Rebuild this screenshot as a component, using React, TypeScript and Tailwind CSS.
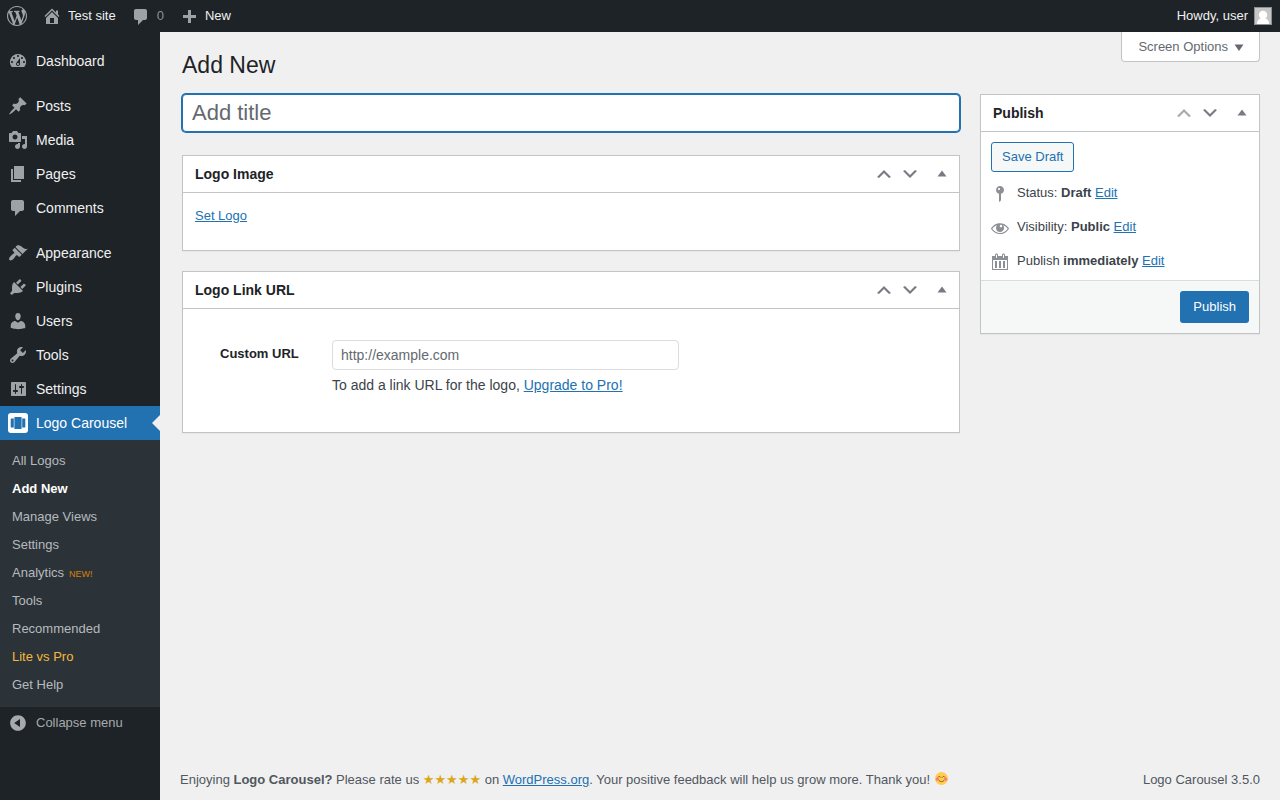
import type { ReactNode } from 'react';
import { clsx } from 'clsx';

// 20x20 glyph outlines used across the admin screen
const icons = {
  wordpress:
    'M20 10c0-5.51-4.49-10-10-10C4.48 0 0 4.49 0 10c0 5.52 4.48 10 10 10 5.51 0 10-4.48 10-10zM7.78 15.37L4.37 6.22c.55-.02 1.17-.08 1.17-.08.5-.06.44-1.13-.06-1.11 0 0-1.45.11-2.37.11-.18 0-.37 0-.58-.01C4.12 2.69 6.87 1.11 10 1.11c2.33 0 4.45.87 6.05 2.34-.68-.11-1.65.39-1.65 1.58 0 .74.45 1.36.9 2.1.35.61.55 1.36.55 2.46 0 1.49-1.4 5-1.4 5l-3.03-8.37c.54-.02.82-.17.82-.17.5-.05.44-1.25-.06-1.22 0 0-1.44.12-2.38.12-.87 0-2.33-.12-2.33-.12-.5-.03-.56 1.2-.06 1.22l.92.08 1.26 3.41zM17.41 10c.24-.64.74-1.87.43-4.25.7 1.29 1.05 2.71 1.05 4.25 0 3.29-1.73 6.24-4.4 7.78.97-2.59 1.94-5.2 2.92-7.78zM6.1 18.09C3.12 16.65 1.11 13.53 1.11 10c0-1.3.23-2.48.72-3.59C3.25 10.3 4.67 14.2 6.1 18.09zm4.03-6.63l2.58 6.98c-.86.29-1.76.45-2.71.45-.79 0-1.57-.11-2.29-.33.81-2.38 1.62-4.74 2.42-7.1z',
  home: 'M16 8.5l1.53 1.53-1.06 1.06L10 4.6l-6.47 6.49-1.06-1.06L10 2.5l4 4v-2h2v4zm-6-2.46l6 5.99V18H4v-5.97zM12 17v-5H8v5h4z',
  plus: 'M17 9v3h-5v5H9v-5H4V9h5V4h3v5h5z',
  dashboard:
    'M3.76 16h12.48A7.998 7.998 0 0 0 10 3a7.998 7.998 0 0 0-6.24 13zM10 4c.55 0 1 .45 1 1s-.45 1-1 1-1-.45-1-1 .45-1 1-1zM6 6c.55 0 1 .45 1 1s-.45 1-1 1-1-.45-1-1 .45-1 1-1zm8 0c.55 0 1 .45 1 1s-.45 1-1 1-1-.45-1-1 .45-1 1-1zm-5.37 5.55L12 7v6c0 1.1-.9 2-2 2s-2-.9-2-2c0-.57.24-1.08.63-1.45zM4 10c.55 0 1 .45 1 1s-.45 1-1 1-1-.45-1-1 .45-1 1-1zm12 0c.55 0 1 .45 1 1s-.45 1-1 1-1-.45-1-1 .45-1 1-1zm-5 3c0-.55-.45-1-1-1s-1 .45-1 1 .45 1 1 1 1-.45 1-1z',
  post: 'M10.44 3.02l1.82-1.82 6.36 6.35-1.83 1.82c-1.05-.68-2.48-.57-3.41.36l-.75.75c-.92.93-1.04 2.35-.35 3.41l-1.83 1.82-2.41-2.41-2.8 2.79c-.42.42-3.38 2.71-3.8 2.29s1.86-3.39 2.28-3.81l2.79-2.79L4.1 9.36l1.83-1.82c1.05.69 2.48.57 3.4-.36l.75-.75c.93-.92 1.05-2.35.36-3.41z',
  media:
    'M13 11V4c0-.55-.45-1-1-1h-1.67L9 1H5L3.67 3H2c-.55 0-1 .45-1 1v7c0 .55.45 1 1 1h10c.55 0 1-.45 1-1zM7 4.5c1.38 0 2.5 1.12 2.5 2.5S8.38 9.5 7 9.5 4.5 8.38 4.5 7 5.62 4.5 7 4.5zM14 6h5v10.5c0 1.38-1.12 2.5-2.5 2.5S14 17.88 14 16.5s1.12-2.5 2.5-2.5c.17 0 .34.02.5.05V9h-3V6zm-4 8.05V13h2v3.5c0 1.38-1.12 2.5-2.5 2.5S7 17.88 7 16.5 8.12 14 9.5 14c.17 0 .34.02.5.05z',
  page: 'M6 15V2h10v13H6zm-1 1h8v2H3V5h2v11z',
  comments: 'M5 2h9c1.1 0 2 .9 2 2v7c0 1.1-.9 2-2 2h-2l-5 5v-5H5c-1.1 0-2-.9-2-2V4c0-1.1.9-2 2-2z',
  appearance:
    'M14.48 11.06L7.41 3.99l1.5-1.5c.5-.56 2.3-.47 3.51.32 1.21.8 1.43 1.28 2.91 2.1 1.18.64 2.45 1.26 4.45.85zm-.71.71L6.7 4.7 4.93 6.47c-.39.39-.39 1.02 0 1.41l1.06 1.06c.39.39.39 1.03 0 1.42-.6.6-1.43 1.11-2.21 1.69-.35.26-.7.53-1.01.84C1.43 14.23.4 16.08 1.4 17.07c.99 1 2.84-.03 4.18-1.36.31-.31.58-.66.85-1.02.57-.78 1.08-1.61 1.69-2.21.39-.39 1.02-.39 1.41 0l1.06 1.06c.39.39 1.02.39 1.41 0z',
  plugins:
    'M13.11 4.36L9.87 7.6 8 5.73l3.24-3.24c.35-.34 1.05-.2 1.56.32.52.51.66 1.21.31 1.55zm-8 1.77l.91-1.12 9.01 9.01-1.19.84c-.71.71-2.63 1.16-3.82 1.16H6.14L4.9 17.26c-.59.59-1.54.59-2.12 0-.59-.58-.59-1.53 0-2.12l1.24-1.24v-3.88c0-1.13.4-3.19 1.09-3.89zm7.26 3.97l3.24-3.24c.34-.35 1.04-.21 1.55.31.52.51.66 1.21.31 1.55l-3.24 3.25z',
  users:
    'M10 9.25c-2.27 0-2.73-3.44-2.73-3.44C7 4.02 7.82 2 9.97 2c2.16 0 2.98 2.02 2.71 3.81 0 0-.41 3.44-2.68 3.44zm0 2.57L12.72 10c2.39 0 4.52 2.33 4.52 4.53v2.49s-3.65 1.13-7.24 1.13c-3.65 0-7.24-1.13-7.24-1.13v-2.49c0-2.25 1.94-4.48 4.47-4.48z',
  tools:
    'M16.68 9.77c-1.34 1.34-3.3 1.67-4.95.99l-5.41 6.52c-.99.99-2.59.99-3.58 0s-.99-2.59 0-3.57l6.52-5.42c-.68-1.65-.35-3.61.99-4.95 1.28-1.28 3.12-1.62 4.72-1.06l-2.89 2.89 2.82 2.82 2.86-2.87c.53 1.58.18 3.39-1.08 4.65zM3.81 16.21c.4.39 1.04.39 1.43 0 .4-.4.4-1.04 0-1.43-.39-.4-1.03-.4-1.43 0-.39.39-.39 1.03 0 1.43z',
  settings:
    'M18 16V4c0-.55-.45-1-1-1H4c-.55 0-1 .45-1 1v12c0 .55.45 1 1 1h13c.55 0 1-.45 1-1zM8 11h1c.55 0 1 .45 1 1s-.45 1-1 1H8v1.5c0 .28-.22.5-.5.5s-.5-.22-.5-.5V13H6c-.55 0-1-.45-1-1s.45-1 1-1h1V5.5c0-.28.22-.5.5-.5s.5.22.5.5V11zm5-2h-1c-.55 0-1-.45-1-1s.45-1 1-1h1V5.5c0-.28.22-.5.5-.5s.5.22.5.5V7h1c.55 0 1 .45 1 1s-.45 1-1 1h-1v5.500c0 .28-.22.5-.5.5s-.5-.22-.5-.5V9z',
  collapse:
    'M10 2.16c4.33 0 7.84 3.51 7.84 7.84s-3.51 7.84-7.84 7.84S2.16 14.33 2.16 10 5.71 2.16 10 2.16zm2 11.72V6.12L6.18 9.97z',
  chevronUp: 'M15 14l-5-5-5 5-2-1 7-7 7 7z',
  chevronDown: 'M5 6l5 5 5-5 2 1-7 7-7-7z',
  arrowUp: 'M6.500 12.500l4.500-6 4.500 6z',
  arrowDown: 'M15.500 7.500l-4.500 6.500-4.500-6.500z',
  status:
    'M14 6c0 1.86-1.28 3.41-3 3.86V16c0 1-2 2-2 2V9.86c-1.72-.45-3-2-3-3.86 0-2.21 1.79-4 4-4s4 1.79 4 4zM8 5c0 .55.45 1 1 1s1-.45 1-1-.45-1-1-1-1 .45-1 1z',
  visibility:
    'M18.3 9.5C15 4.9 8.5 3.8 3.9 7.2c-1.2.9-2.2 2.1-3 3.4.2.4.5.8.8 1.2 3.3 4.6 9.6 5.6 14.2 2.4.9-.7 1.7-1.4 2.4-2.4.3-.4.5-.8.8-1.2-.3-.4-.5-.8-.8-1.1zm-8.2-2.3c.5-.5 1.3-.5 1.8 0s.5 1.3 0 1.8-1.3.5-1.8 0-.5-1.3 0-1.8zm-.1 7.7c-3.1 0-6-1.6-7.7-4.2C3.5 9 5.1 7.8 7 7.2c-.7.8-1 1.7-1 2.7 0 2.2 1.7 4.1 4 4.1 2.2 0 4.1-1.7 4.1-4v-.1c0-1-.4-2-1.1-2.7 1.9.6 3.5 1.8 4.7 3.5-1.7 2.6-4.6 4.2-7.7 4.2z',
  calendar:
    'M15 4h3v14H2V4h3V3c0-.83.67-1.5 1.5-1.5S8 2.17 8 3v1h4V3c0-.83.67-1.5 1.5-1.5S15 2.17 15 3v1zM6 3v2.5c0 .28.22.5.5.5s.5-.22.5-.5V3c0-.28-.22-.5-.5-.5S6 2.72 6 3zm7 0v2.5c0 .28.22.5.5.5s.5-.22.5-.5V3c0-.28-.22-.5-.5-.5s-.5.22-.5.5zm4 14V8H3v9h14zM7 9v7H5V9h2zm4 0v7H9V9h2zm4 0v7h-2V9h2z',
};

type IconName = keyof typeof icons;

function Icon({ name, className }: { name: IconName; className?: string }) {
  return (
    <svg viewBox="0 0 20 20" className={clsx('size-5 shrink-0 fill-current', className)} aria-hidden="true">
      <path fillRule="evenodd" d={icons[name]} />
    </svg>
  );
}

function CarouselLogo() {
  return (
    <svg viewBox="0 0 20 20" className="size-5 shrink-0" aria-hidden="true">
      <rect width="20" height="20" rx="3" fill="#fff" />
      <rect x="6.4" y="4" width="7.2" height="12" rx="0.6" fill="#2271b1" />
      <path d="M3.3 5.400h2.500v9.200H3.300a.6.6 0 0 1-.6-.6V6a.6.6 0 0 1 .6-.6zM14.200 5.400h2.500a.6.6 0 0 1 .6.6v8a.6.6 0 0 1-.6.6h-2.500z" fill="#2271b1" />
    </svg>
  );
}

function SmileEmoji() {
  return (
    <svg viewBox="0 0 36 36" className="ml-px inline-block size-[13px] align-[-1px]" role="img" aria-label="Smile">
      <circle cx="18" cy="18" r="18" fill="#ffcc4d" />
      <circle cx="6.5" cy="20" r="4.5" fill="#ff7892" />
      <circle cx="29.5" cy="20" r="4.5" fill="#ff7892" />
      <path
        d="M8 14.500c2-3 6-3 8 0M20 14.500c2-3 6-3 8 0M11 23.500c3 4.500 11 4.500 14 0"
        fill="none"
        stroke="#664500"
        strokeWidth="2"
        strokeLinecap="round"
      />
    </svg>
  );
}

const menuGroups: { label: string; icon: IconName }[][] = [
  [{ label: 'Dashboard', icon: 'dashboard' }],
  [
    { label: 'Posts', icon: 'post' },
    { label: 'Media', icon: 'media' },
    { label: 'Pages', icon: 'page' },
    { label: 'Comments', icon: 'comments' },
  ],
  [
    { label: 'Appearance', icon: 'appearance' },
    { label: 'Plugins', icon: 'plugins' },
    { label: 'Users', icon: 'users' },
    { label: 'Tools', icon: 'tools' },
    { label: 'Settings', icon: 'settings' },
  ],
];

const submenu = [
  { label: 'All Logos' },
  { label: 'Add New', current: true },
  { label: 'Manage Views' },
  { label: 'Settings' },
  { label: 'Analytics', badge: 'NEW!' },
  { label: 'Tools' },
  { label: 'Recommended' },
  { label: 'Lite vs Pro', highlight: true },
  { label: 'Get Help' },
];

function AdminBar() {
  return (
    <header className="flex h-8 items-center justify-between bg-[#1d2327] px-[7px] text-[13px] leading-8 text-[#f0f0f1]">
      <div className="flex items-center">
        <a href="#" aria-label="About WordPress" className="text-[#a0a5aa]">
          <Icon name="wordpress" />
        </a>
        <a href="#" className="ml-[15px] flex items-center gap-[6px]">
          <Icon name="home" className="text-[#9ca2a7]" />
          Test site
        </a>
        <a href="#" className="ml-[15px] flex items-center gap-[6px] text-[#8b9095]">
          <Icon name="comments" className="mt-[2px] text-[#9ca2a7]" />0
        </a>
        <a href="#" className="ml-[15px] flex items-center gap-[6px]">
          <Icon name="plus" className="text-[#9ca2a7]" />
          New
        </a>
      </div>
      <a href="#" className="flex items-center gap-[6px]">
        Howdy, user
        <svg viewBox="0 0 18 18" className="mr-px size-[18px]" aria-hidden="true">
          <rect width="18" height="18" fill="#8c8f94" />
          <rect x="1" y="1" width="16" height="16" fill="#c6c6c6" />
          <circle cx="9" cy="8" r="4.2" fill="#fff" />
          <path d="M3 17c0-3.500 2-5.500 4-5.500h4c2 0 4 2 4 5.500z" fill="#fff" />
        </svg>
      </a>
    </header>
  );
}

function Sidebar() {
  return (
    <nav className="w-40 shrink-0 bg-[#1d2327] pt-3 text-sm text-[#f0f0f1]">
      <div className="flex flex-col gap-[11px]">
        {menuGroups.map((group) => (
          <ul key={group[0].label}>
            {group.map((item) => (
              <li key={item.label}>
                <a href="#" className="flex h-[34px] items-center gap-2 pl-2">
                  <Icon name={item.icon} className="text-[#9ca2a7]" />
                  {item.label}
                </a>
              </li>
            ))}
          </ul>
        ))}
      </div>
      <a href="#" className="relative flex h-[34px] items-center gap-2 bg-[#2271b1] pl-2 text-white">
        <CarouselLogo />
        Logo Carousel
        <span className="absolute top-[9px] right-0 border-8 border-l-0 border-transparent border-r-[#f0f0f1]" />
      </a>
      <ul className="bg-[#2c3338] pt-[7px] pb-2 text-[13px] text-[#b5babe]">
        {submenu.map((item) => (
          <li key={item.label}>
            <a
              href="#"
              className={clsx(
                'block h-7 pl-3 leading-7',
                item.current && 'font-bold text-white',
                item.highlight && 'text-[#f5b83d]'
              )}
            >
              {item.label}
              {item.badge && <span className="pl-[5px] text-[9px] text-[#d67f0c]">{item.badge}</span>}
            </a>
          </li>
        ))}
      </ul>
      <button type="button" className="flex h-8 w-full items-center gap-2 pl-2 text-[13px] text-[#a7aaad]">
        <Icon name="collapse" />
        Collapse menu
      </button>
    </nav>
  );
}

interface PostboxProps {
  title: string;
  first?: boolean;
  children: ReactNode;
}

function Postbox({ title, first, children }: PostboxProps) {
  return (
    <section className="border border-[#c3c4c7] bg-white shadow-[0_1px_1px_rgba(0,0,0,0.04)]">
      <div className="flex items-center border-b border-[#c3c4c7] text-[#787c82]">
        <h2 className="flex-1 pl-3 text-sm leading-9 font-bold text-[#1d2327]">{title}</h2>
        <button
          type="button"
          aria-label={`Move ${title} up`}
          className={clsx('flex h-9 w-[26px] items-center justify-center', first && 'text-[#a7aaad]')}
        >
          <Icon name="chevronUp" />
        </button>
        <button type="button" aria-label={`Move ${title} down`} className="flex h-9 w-[26px] items-center justify-center">
          <Icon name="chevronDown" />
        </button>
        <button type="button" aria-label={`Toggle ${title}`} className="flex h-9 w-9 items-center justify-center">
          <Icon name="arrowUp" />
        </button>
      </div>
      {children}
    </section>
  );
}

function Link({ children }: { children: ReactNode }) {
  return (
    <a href="#" className="text-[#2271b1] underline">
      {children}
    </a>
  );
}

const publishRows: { icon: IconName; label: string; value: string }[] = [
  { icon: 'status', label: 'Status:', value: 'Draft' },
  { icon: 'visibility', label: 'Visibility:', value: 'Public' },
  { icon: 'calendar', label: 'Publish', value: 'immediately' },
];

function PublishBox() {
  return (
    <Postbox title="Publish" first>
      <div className="px-[10px] pt-[10px]">
        <button
          type="button"
          className="h-[30px] rounded-[3px] border border-[#2271b1] bg-[#f6f7f7] px-[10px] text-[13px] text-[#2271b1]"
        >
          Save Draft
        </button>
      </div>
      <ul className="px-[9px] pt-1 pb-[2px]">
        {publishRows.map((row) => (
          <li key={row.label} className="flex h-[34px] gap-[7px]">
            <Icon name={row.icon} className="mt-2 text-[#8c8f94]" />
            <span className="leading-[34px]">
              {row.label} <b>{row.value}</b> <Link>Edit</Link>
            </span>
          </li>
        ))}
      </ul>
      <div className="flex justify-end border-t border-[#dcdcde] bg-[#f6f7f7] p-[10px]">
        <button type="button" className="h-8 rounded-[3px] bg-[#2271b1] px-[13px] text-[13px] text-white">
          Publish
        </button>
      </div>
    </Postbox>
  );
}

export default function App() {
  return (
    <div className="flex min-h-screen flex-col bg-[#f0f0f1] font-['Liberation_Sans',Arial,sans-serif] text-[13px] text-[#3c434a]">
      <AdminBar />
      <div className="flex flex-1">
        <Sidebar />
        <main className="flex min-w-0 flex-1 flex-col pr-5 pl-[22px]">
          <div className="flex h-[62px] items-start justify-between">
            <h1 className="pt-[18px] text-[23px] leading-[30px] text-[#1d2327]">Add New</h1>
            <button
              type="button"
              className="flex h-[30px] items-center rounded-b-[4px] border border-t-0 border-[#c3c4c7] bg-white pr-[11px] pl-4 text-[#646970]"
            >
              Screen Options
              <Icon name="arrowDown" />
            </button>
          </div>

          <div className="flex items-start gap-5">
            <div className="flex min-w-0 flex-1 flex-col gap-5">
              <input
                type="text"
                aria-label="Add title"
                placeholder="Add title"
                className="mb-[3px] h-[38px] w-full rounded-[4px] border border-[#2271b1] bg-white px-[9px] text-[22px] shadow-[0_0_0_1px_#2271b1] outline-none placeholder:text-[#646970]"
              />

              <Postbox title="Logo Image">
                <p className="px-3 pt-[13px] pb-6 leading-5">
                  <Link>Set Logo</Link>
                </p>
              </Postbox>

              <Postbox title="Logo Link URL">
                <div className="flex px-[37px] pt-[31px] pb-[37px]">
                  <label htmlFor="custom-url" className="w-28 leading-7 font-bold text-[#1d2327]">
                    Custom URL
                  </label>
                  <div className="text-sm">
                    <input
                      id="custom-url"
                      type="text"
                      placeholder="http://example.com"
                      className="block h-[30px] w-[347px] rounded-[4px] border border-[#dcdcde] bg-white px-2 placeholder:text-[#646970]"
                    />
                    <p className="mt-[5px] leading-5">
                      To add a link URL for the logo, <Link>Upgrade to Pro!</Link>
                    </p>
                  </div>
                </div>
              </Postbox>
            </div>

            <aside className="w-[280px] shrink-0">
              <PublishBox />
            </aside>
          </div>

          <footer className="mt-auto -ml-[2px] flex items-end justify-between pb-[10px] leading-5 text-[#50575e]">
            <p>
              Enjoying <b>Logo Carousel?</b> Please rate us{' '}
              <a href="#" className="font-['DejaVu_Sans',sans-serif] text-[#dba617]">
                ★★★★★
              </a>{' '}
              on <Link>WordPress.org</Link>. Your positive feedback will help us grow more. Thank you! <SmileEmoji />
            </p>
            <p>Logo Carousel 3.5.0</p>
          </footer>
        </main>
      </div>
    </div>
  );
}
